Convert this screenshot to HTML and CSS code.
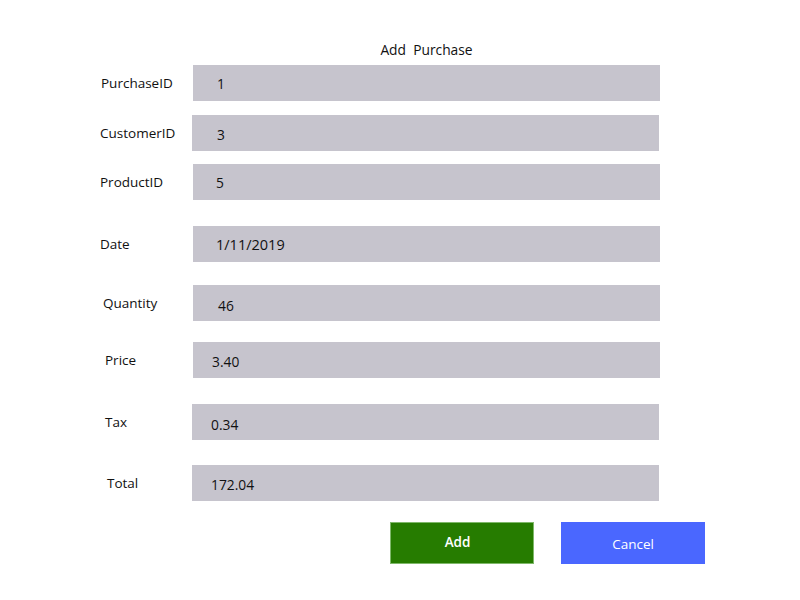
FILE: index.html
```html
<!DOCTYPE html>
<html>
<head>
<meta charset="utf-8">
<link rel="stylesheet" href="styles.css">
</head>
<body>
<div class="page">
  <div class="title">Add  Purchase</div>
  <div class="fields">
    <div class="row r1"><span class="label">PurchaseID</span><div class="box"><span class="val">1</span></div></div>
    <div class="row r2"><span class="label">CustomerID</span><div class="box"><span class="val">3</span></div></div>
    <div class="row r3"><span class="label">ProductID</span><div class="box"><span class="val">5</span></div></div>
    <div class="row r4"><span class="label">Date</span><div class="box"><span class="val date">1/11/2019</span></div></div>
    <div class="row r5"><span class="label">Quantity</span><div class="box"><span class="val">46</span></div></div>
    <div class="row r6"><span class="label">Price</span><div class="box"><span class="val">3.40</span></div></div>
    <div class="row r7"><span class="label">Tax</span><div class="box"><span class="val">0.34</span></div></div>
    <div class="row r8"><span class="label">Total</span><div class="box"><span class="val">172.04</span></div></div>
  </div>
  <div class="actions">
    <button class="btn btn-add">Add</button>
    <button class="btn btn-cancel">Cancel</button>
  </div>
</div>
</body>
</html>
```

FILE: styles.css
```css
html, body {
  margin: 0;
  padding: 0;
  background: #ffffff;
}
body {
  font-family: "Open Sans", "Liberation Sans", sans-serif;
  font-size: 13.5px;
  color: #111111;
}
.page {
  width: 800px;
  height: 600px;
  padding-top: 40px;
  box-sizing: border-box;
}
.title {
  white-space: pre;
  text-align: center;
  padding-left: 53px;
  line-height: 20px;
  height: 20px;
  font-size: 13.8px;
}
.fields {
  display: flex;
  flex-direction: column;
  padding-left: 100px;
}
.row {
  display: flex;
  align-items: center;
  height: 36px;
}
.label {
  width: 93px;
  flex: none;
  box-sizing: border-box;
}
.box {
  width: 467px;
  height: 36px;
  background: #c6c4cd;
  display: flex;
  align-items: center;
  box-sizing: border-box;
  padding-left: 24px;
}
.val {
  font-size: 13.8px;
}
.val.date {
  font-size: 14.5px;
}
.r1 { margin-top: 5px; }
.r1 .label { padding-left: 1px; }
.r2 { margin-top: 14px; }
.r2 .box { margin-left: -1px; padding-left: 25px; }
.r2 .val { position: relative; top: 1px; }
.r3 { margin-top: 13px; }
.r3 .box { padding-left: 23px; }
.r4 { margin-top: 26px; }
.r4 .box { padding-left: 23px; }
.r5 { margin-top: 23px; }
.r5 .label { padding-left: 3px; }
.r5 .box { padding-left: 25px; }
.r5 .val { position: relative; top: 2px; }
.r6 { margin-top: 21px; }
.r6 .label { padding-left: 5px; }
.r6 .box { padding-left: 19px; }
.r6 .val { position: relative; top: 1px; }
.r7 { margin-top: 26px; }
.r7 .label { padding-left: 5px; }
.r7 .box { margin-left: -1px; padding-left: 19px; }
.r7 .val { position: relative; top: 2px; }
.r8 { margin-top: 25px; }
.r8 .label { padding-left: 7px; }
.r8 .box { margin-left: -1px; padding-left: 19px; }
.r8 .val { position: relative; top: 1px; }
.actions {
  display: flex;
  gap: 27px;
  padding-left: 390px;
  margin-top: 21px;
}
.btn {
  width: 144px;
  height: 42px;
  border: none;
  font-family: "Open Sans", "Liberation Sans", sans-serif;
  font-size: 13.5px;
  color: #ffffff;
  padding: 0;
  margin: 0;
}
.btn-add {
  background: #267c00;
  border: 1px solid #7fb86a;
  font-weight: 600;
  padding-bottom: 3px;
  padding-right: 9px;
}
.btn-cancel {
  background: #4a67ff;
  padding-top: 2px;
}
```
